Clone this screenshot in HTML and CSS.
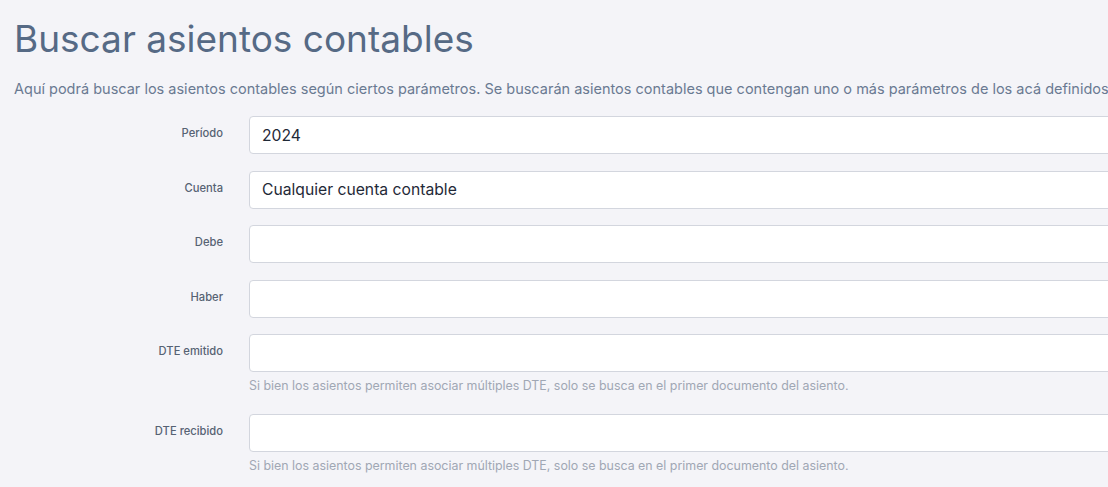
FILE: index.html
```html
<!DOCTYPE html>
<html lang="es">
<head>
  <meta charset="UTF-8">
  <meta name="viewport" content="width=device-width, initial-scale=1.0">
  <title>Buscar asientos contables</title>
  <link rel="stylesheet" href="styles.css">
</head>
<body>
  <main class="page">
    <h1 class="page-title">Buscar asientos contables</h1>
    <p class="lead">Aquí podrá buscar los asientos contables según ciertos parámetros. Se buscarán asientos contables que contengan uno o más parámetros de los acá definidos.</p>

    <form class="search-form">
      <div class="form-row">
        <label for="periodo">Período</label>
        <div class="field">
          <input type="text" id="periodo" value="2024">
        </div>
      </div>
      <div class="form-row">
        <label for="cuenta">Cuenta</label>
        <div class="field">
          <input type="text" id="cuenta" value="Cualquier cuenta contable">
        </div>
      </div>
      <div class="form-row">
        <label for="debe">Debe</label>
        <div class="field">
          <input type="text" id="debe">
        </div>
      </div>
      <div class="form-row">
        <label for="haber">Haber</label>
        <div class="field">
          <input type="text" id="haber">
        </div>
      </div>
      <div class="form-row">
        <label for="dte_emitido">DTE emitido</label>
        <div class="field">
          <input type="text" id="dte_emitido">
          <small class="help">Si bien los asientos permiten asociar múltiples DTE, solo se busca en el primer documento del asiento.</small>
        </div>
      </div>
      <div class="form-row">
        <label for="dte_recibido">DTE recibido</label>
        <div class="field">
          <input type="text" id="dte_recibido">
          <small class="help">Si bien los asientos permiten asociar múltiples DTE, solo se busca en el primer documento del asiento.</small>
        </div>
      </div>
    </form>
  </main>
</body>
</html>
```

FILE: styles.css
```css
html, body {
  overflow: hidden;
}
body {
  margin: 0;
  background-color: #f4f4f8;
  font-family: Inter, "Noto Sans", sans-serif;
  color: #566a85;
}
.page {
  width: 1400px;
  padding: 0 14px;
}
.page-title {
  font-size: 37px;
  font-weight: 400;
  color: #566a85;
  margin: 17px 0 0;
  line-height: 1.2;
}
.lead {
  font-size: 14.5px;
  color: #6a7a92;
  margin: 19px 0 19px;
  white-space: nowrap;
}
.search-form {
  display: flex;
  flex-direction: column;
  gap: 16.5px;
}
.form-row {
  display: grid;
  grid-template-columns: 209px 1fr;
  column-gap: 26px;
}
.form-row label {
  text-align: right;
  font-size: 11.2px;
  font-weight: 500;
  color: #566273;
  padding-top: 10px;
}
.field input[type="text"] {
  display: block;
  box-sizing: border-box;
  width: 100%;
  height: 38px;
  padding: 6px 12px;
  border: 1px solid #d3d6de;
  border-radius: 4px;
  background: #ffffff;
  font-family: inherit;
  font-size: 15.7px;
  color: #1f2937;
}
.help {
  display: block;
  margin: 6px 0 4px;
  font-size: 12.4px;
  color: #a0a7b4;
}
```
